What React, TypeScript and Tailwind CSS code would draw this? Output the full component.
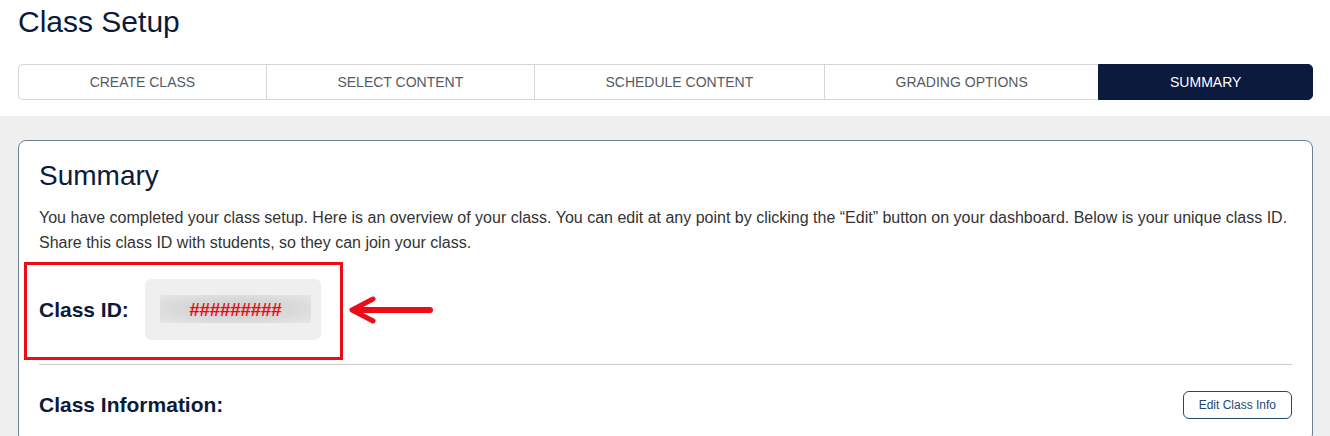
import React from "react";

const steps = ["CREATE CLASS", "SELECT CONTENT", "SCHEDULE CONTENT", "GRADING OPTIONS", "SUMMARY"];

export default function App() {
  const active = steps.length - 1;

  return (
    <div className="min-h-screen bg-white font-['Liberation_Sans',Arial,sans-serif]">
      {/* Header */}
      <div className="pl-[18px] pr-[17px] pt-1 pb-4">
        <h1 className="text-[30px] leading-[35px] text-[#0c1a3a]">Class Setup</h1>

        {/* Steps */}
        <div className="mt-[25px] flex h-9">
          {steps.map((step, i) => (
            <div
              key={step}
              className={
                i === active
                  ? "flex flex-auto items-center justify-center rounded-r-[5px] border border-[#0b1a3d] bg-[#0b1a3d] text-[14px] text-white"
                  : i === 0
                  ? "flex flex-auto items-center justify-center rounded-l-[5px] border-y border-l border-[#d6d6d6] text-[14px] text-[#555b63]"
                  : "flex flex-auto items-center justify-center border-y border-l border-[#d6d6d6] text-[14px] text-[#555b63]"
              }
            >
              {step}
            </div>
          ))}
        </div>
      </div>

      {/* Body */}
      <div className="bg-[#efefef] pl-[18px] pr-[17px] pt-6 pb-6">
        <div className="rounded-[8px] border border-[#6f7f8f] bg-white px-5 pt-[18px] pb-5">
          <h2 className="text-[28px] leading-[33px] text-[#0c1a3a]">Summary</h2>
          <p className="mt-[13px] text-[16px] leading-[25px] text-[#333333]">
            <span className="whitespace-nowrap">
              You have completed your class setup. Here is an overview of your class. You can edit at any point by clicking the “Edit” button on your dashboard. Below is your unique class ID.
            </span>
            <br />
            Share this class ID with students, so they can join your class.
          </p>

          {/* Class ID */}
          <div className="relative mt-6 flex items-center gap-4">
            <span className="text-[21px] font-bold text-[#0c1a3a]">Class ID:</span>
            <div className="h-[61px] w-[176px] rounded-[6px] bg-[#efefef] pt-4 pl-[15px] pr-[10px]">
              <div className="flex h-[28px] items-center justify-center bg-[radial-gradient(ellipse_at_center,#cdcdcd_0%,#d9d9d9_55%,#e6e6e6_100%)]">
                <span className="text-[19px] font-bold leading-none tracking-[-0.3px] text-[#ee0a14]">#########</span>
              </div>
            </div>

            {/* annotation */}
            <div className="pointer-events-none absolute -left-[15px] -top-[17px] h-[98px] w-[319px] border-[3px] border-[#ec0c18]" />
            <svg
              className="pointer-events-none absolute left-[307px] top-[17px]"
              width="90"
              height="28"
              viewBox="0 0 90 28"
            >
              <line x1="8" y1="14" x2="84" y2="14" stroke="#ec0c18" strokeWidth="6" strokeLinecap="round" />
              <polyline
                points="27,3 6,14 27,25"
                fill="none"
                stroke="#ec0c18"
                strokeWidth="5"
                strokeLinecap="round"
                strokeLinejoin="round"
              />
            </svg>
          </div>

          <div className="mt-6 border-t border-[#cccccc]" />

          {/* Class Information */}
          <div className="mt-6 flex items-center justify-between">
            <h3 className="text-[21px] font-bold text-[#0c1a3a]">Class Information:</h3>
            <button className="h-7 rounded-[6px] border border-[#1d4a6e] px-[15px] text-[12px] text-[#1d4a6e]">
              Edit Class Info
            </button>
          </div>
        </div>
      </div>
    </div>
  );
}
